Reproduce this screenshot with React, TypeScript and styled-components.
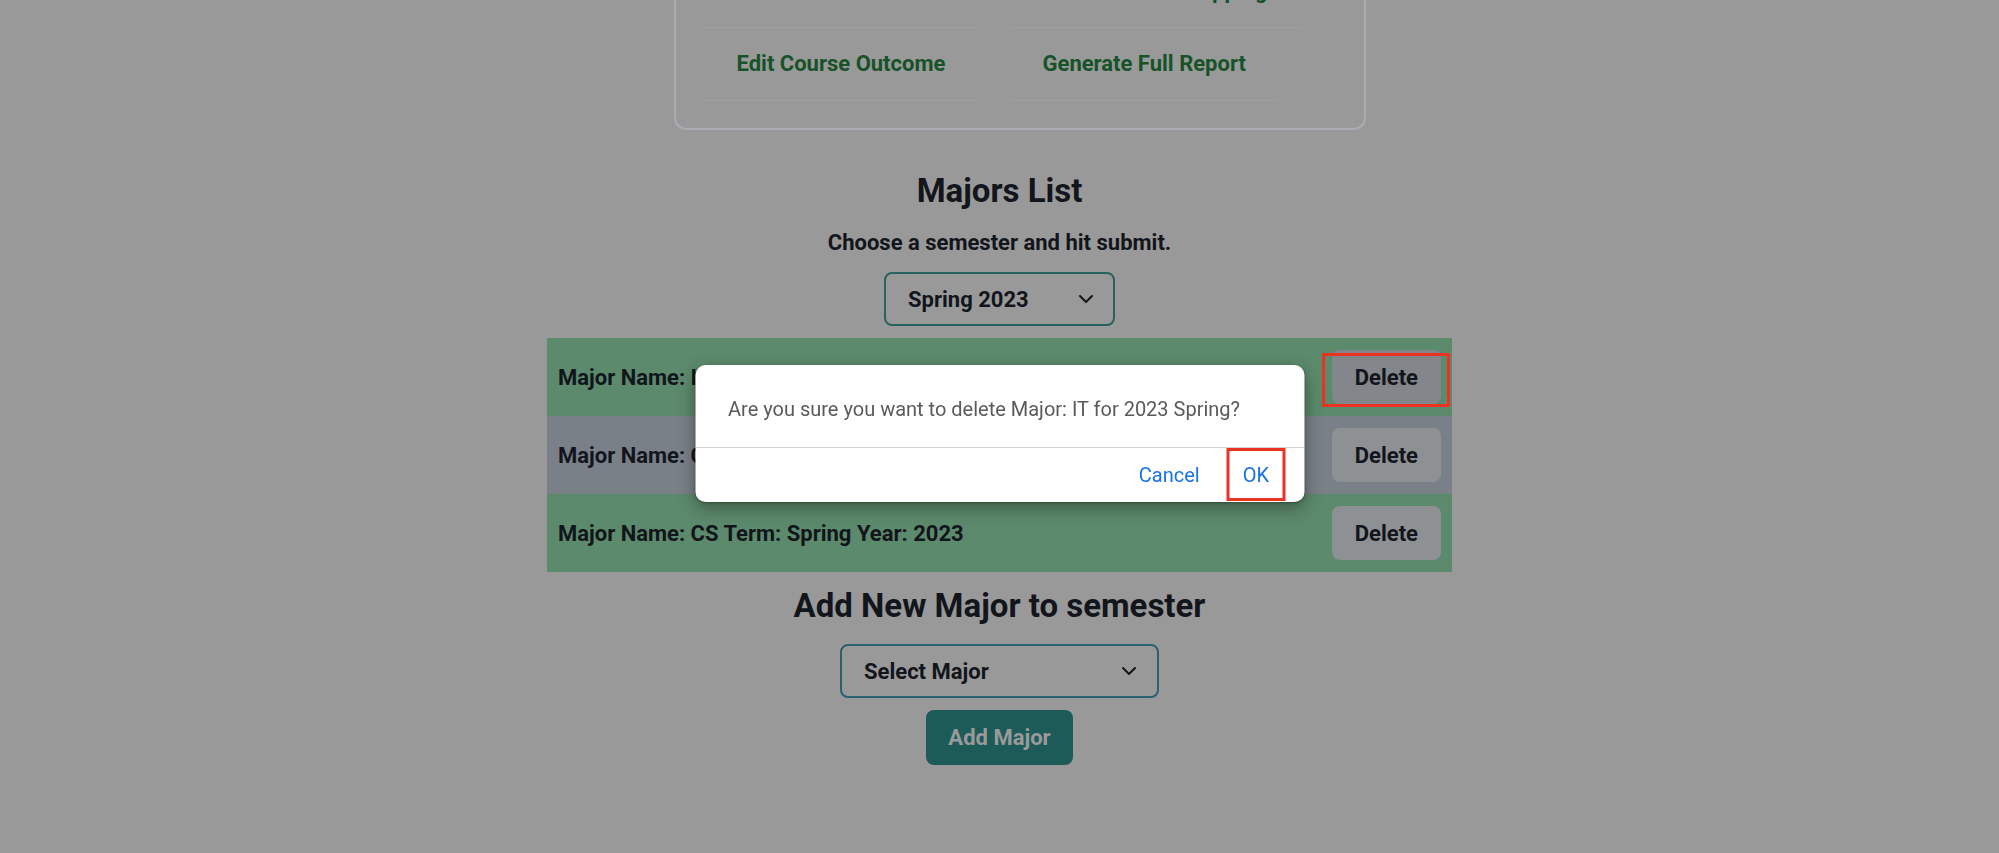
import React from "react";
import styled, { createGlobalStyle } from "styled-components";
import { ChevronDown } from "lucide-react";

const GlobalStyle = createGlobalStyle`
  html, body {
    margin: 0;
    padding: 0;
    background: #999999;
    overflow: hidden;
    font-family: Roboto, "Liberation Sans", Arial, sans-serif;
    color: #12151b;
  }
  * { box-sizing: border-box; }
`;

const Page = styled.main`
  display: flex;
  flex-direction: column;
  align-items: center;
  width: 1999px;
  min-height: 853px;
`;

const Card = styled.section`
  width: 692px;
  margin-top: -75px;
  margin-left: 40px;
  padding: 28px 28px 27px;
  border: 2px solid #a9acb3;
  border-radius: 12px;
  display: grid;
  grid-template-columns: 277px auto;
  column-gap: 29px;
  justify-content: start;
`;

const CardLink = styled.a`
  justify-self: start;
  display: block;
  padding: 23px 33px;
  line-height: 26px;
  font-size: 22px;
  font-weight: 700;
  color: #175229;
  text-decoration: none;
  border-bottom: 1px solid #a0a0a2;
  white-space: nowrap;
`;

const Heading = styled.h2<{ $top: number }>`
  margin: ${(p) => p.$top}px 0 0;
  font-size: 33px;
  line-height: 36px;
  font-weight: 700;
`;

const Hint = styled.p`
  margin: 20px 0 0;
  font-size: 22px;
  line-height: 28px;
  font-weight: 700;
`;

const SelectBox = styled.div<{ $w: number; $top: number; $border: string; $right: number }>`
  width: ${(p) => p.$w}px;
  height: 54px;
  margin-top: ${(p) => p.$top}px;
  padding: 0 ${(p) => p.$right}px 0 22px;
  display: flex;
  align-items: center;
  justify-content: space-between;
  border: 2px solid ${(p) => p.$border};
  border-radius: 8px;
  font-size: 22px;
  font-weight: 700;
  cursor: pointer;
`;

const Rows = styled.div`
  width: 905px;
  margin-top: 12px;
  display: flex;
  flex-direction: column;
`;

const Row = styled.div<{ $bg: string }>`
  height: 78px;
  padding: 0 11px;
  display: flex;
  align-items: center;
  justify-content: space-between;
  background: ${(p) => p.$bg};
  font-size: 22px;
  font-weight: 700;
  white-space: nowrap;
`;

const DeleteButton = styled.button<{ $hover?: boolean; $marked?: boolean }>`
  position: relative;
  height: 54px;
  padding: 0 23px;
  border: none;
  border-radius: 8px;
  background: ${(p) => (p.$hover ? "#83868b" : "#8e9194")};
  color: #12151b;
  font-family: inherit;
  font-size: 22px;
  font-weight: 700;
  cursor: pointer;

  &::after {
    content: "";
    display: ${(p) => (p.$marked ? "block" : "none")};
    position: absolute;
    left: -10px;
    right: -9px;
    top: 3px;
    bottom: -3px;
    border: 3px solid #ec3323;
    pointer-events: none;
  }
`;

const AddButton = styled.button`
  margin-top: 12px;
  height: 55px;
  width: 147px;
  border: none;
  border-radius: 8px;
  background: #1d5b59;
  color: #9a9a9a;
  font-family: inherit;
  font-size: 22px;
  font-weight: 700;
  cursor: pointer;
`;

const Dialog = styled.div`
  position: fixed;
  top: 365px;
  left: 50%;
  transform: translateX(-50%);
  width: 609px;
  background: #ffffff;
  border-radius: 10px;
  box-shadow: 0 6px 18px rgba(0, 0, 0, 0.35), 0 1px 3px rgba(0, 0, 0, 0.25);
  font-family: Roboto, "Liberation Sans", Arial, sans-serif;
  overflow: hidden;
`;

const Message = styled.p`
  margin: 0;
  padding: 32px 33px 25px;
  font-size: 20px;
  line-height: 25px;
  color: #5a5a5a;
  border-bottom: 1px solid #d2d2d2;
`;

const DialogActions = styled.div`
  height: 54px;
  padding: 0 19px 1px 0;
  display: flex;
  align-items: center;
  justify-content: flex-end;
  gap: 13px;
`;

const TextButton = styled.button<{ $marked?: boolean }>`
  height: 53px;
  padding: 0 ${(p) => (p.$marked ? 13 : 11)}px;
  background: transparent;
  border: 3px solid ${(p) => (p.$marked ? "#ec3323" : "transparent")};
  color: #1a73e8;
  font-family: inherit;
  font-size: 20px;
  cursor: pointer;
`;

const rows = [
  { text: "Major Name: IT Term: Spring Year: 2023", bg: "#5c8a6c", hover: true, marked: true },
  { text: "Major Name: CIS Term: Spring Year: 2023", bg: "#7a8088" },
  { text: "Major Name: CS Term: Spring Year: 2023", bg: "#5c8a6c" },
];

export default function App() {
  return (
    <>
      <GlobalStyle />
      <Page>
        <Card>
          <CardLink href="#">Add Course Outcome</CardLink>
          <CardLink href="#">Edit Outcome Mapping</CardLink>
          <CardLink href="#">Edit Course Outcome</CardLink>
          <CardLink href="#">Generate Full Report</CardLink>
        </Card>

        <Heading $top={43}>Majors List</Heading>
        <Hint>Choose a semester and hit submit.</Hint>
        <SelectBox $w={231} $top={15} $border="#28625e" $right={15}>
          <span>Spring 2023</span>
          <ChevronDown size={24} strokeWidth={2} />
        </SelectBox>

        <Rows>
          {rows.map((r) => (
            <Row key={r.text} $bg={r.bg}>
              <span>{r.text}</span>
              <DeleteButton $hover={r.hover} $marked={r.marked}>
                Delete
              </DeleteButton>
            </Row>
          ))}
        </Rows>

        <Heading $top={16}>Add New Major to semester</Heading>
        <SelectBox $w={319} $top={20} $border="#2b6070" $right={16}>
          <span>Select Major</span>
          <ChevronDown size={24} strokeWidth={2} />
        </SelectBox>
        <AddButton>Add Major</AddButton>
      </Page>

      <Dialog role="alertdialog">
        <Message>Are you sure you want to delete Major: IT for 2023 Spring?</Message>
        <DialogActions>
          <TextButton>Cancel</TextButton>
          <TextButton $marked>OK</TextButton>
        </DialogActions>
      </Dialog>
    </>
  );
}
